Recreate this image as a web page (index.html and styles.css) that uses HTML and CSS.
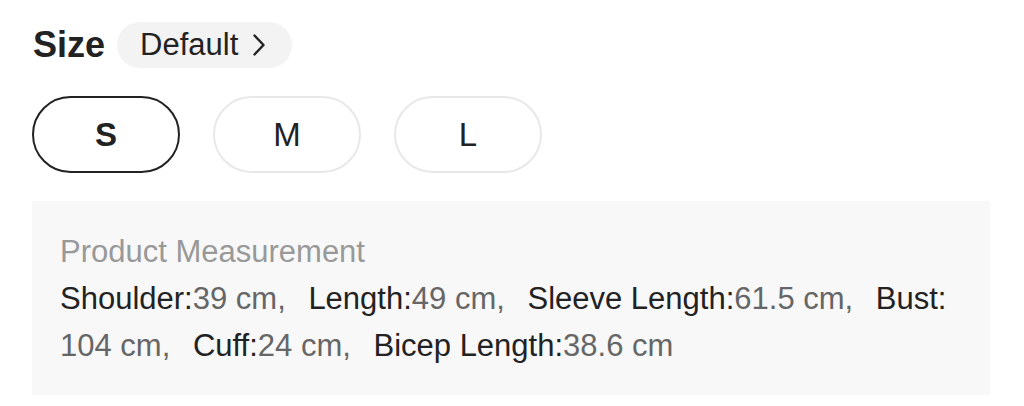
FILE: index.html
```html
<!DOCTYPE html>
<html lang="en">
<head>
<meta charset="utf-8">
<title>Size</title>
<link rel="stylesheet" href="styles.css">
</head>
<body>
<div class="page">
  <div class="size-head">
    <span class="size-title">Size</span>
    <span class="size-pill">Default<svg class="chev" width="14" height="24" viewBox="0 0 14 24"><path d="M2.5 2.5 L11.5 12 L2.5 21.5" fill="none" stroke="#222" stroke-width="2.4" stroke-linecap="round" stroke-linejoin="round"/></svg></span>
  </div>
  <div class="size-options">
    <button class="opt opt-active">S</button>
    <button class="opt">M</button>
    <button class="opt">L</button>
  </div>
  <div class="measure">
    <div class="measure-title">Product Measurement</div>
    <div class="measure-list"><span class="item"><span class="k">Shoulder:</span><wbr><span class="v">39 cm,</span></span> <span class="item"><span class="k">Length:</span><wbr><span class="v">49 cm,</span></span> <span class="item"><span class="k">Sleeve Length:</span><wbr><span class="v">61.5 cm,</span></span> <span class="item"><span class="k">Bust:</span><wbr><span class="v">104 cm,</span></span> <span class="item"><span class="k">Cuff:</span><wbr><span class="v">24 cm,</span></span> <span class="item"><span class="k">Bicep Length:</span><wbr><span class="v">38.6 cm</span></span></div>
  </div>
</div>
</body>
</html>
```
FILE: styles.css
```css
* { box-sizing: border-box; }
html, body { margin: 0; padding: 0; background: #fff; }
body {
  font-family: "Liberation Sans", Arial, Helvetica, sans-serif;
  color: #222;
}
.page {
  padding: 22px 34px 0 32px;
}
.size-head {
  display: flex;
  align-items: center;
  gap: 12px;
  height: 46px;
}
.size-title {
  font-size: 36px;
  font-weight: 700;
  padding-left: 1px;
  line-height: 46px;
  color: #222;
}
.size-pill {
  display: inline-flex;
  align-items: center;
  height: 46px;
  padding: 0 26px 0 23px;
  border-radius: 23px;
  background: #f3f3f3;
  font-size: 31px;
  color: #222;
  line-height: 46px;
}
.chev {
  margin-left: 14px;
  display: block;
}
.size-options {
  display: flex;
  gap: 33px;
  margin-top: 28px;
}
.opt {
  width: 148px;
  height: 77px;
  border: 2px solid #e8e8e8;
  border-radius: 39px;
  background: #fff;
  font-family: "Liberation Sans", Arial, Helvetica, sans-serif;
  font-size: 33px;
  color: #222;
  padding: 0;
}
.opt-active {
  border-color: #222;
  font-weight: 700;
}
.measure {
  margin-top: 28px;
  background: #f8f8f8;
  padding: 27px 28px 26px 28px;
  font-size: 31px;
  line-height: 47px;
}
.measure-title {
  color: #999;
}
.measure-list {
  color: #222;
}
.item {
  margin-right: 14px;
}
.k { color: #222; }
.v { color: #666; }
```
